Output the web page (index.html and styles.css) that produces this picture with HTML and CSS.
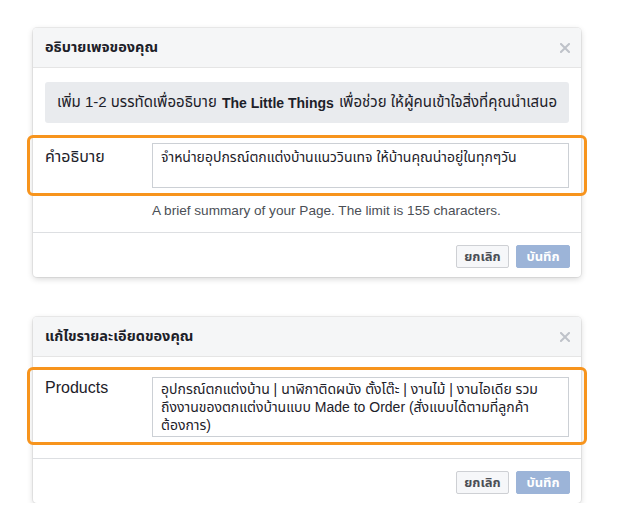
FILE: index.html
```html
<!DOCTYPE html>
<html>
  <head>
    <meta charset="utf-8" />
    <title>Page Info</title>
    <link rel="stylesheet" href="styles.css">
  </head>
  <body>
    <div class="page">

      <div class="dialog">
        <div class="dialog-header">
          <span class="dialog-title">อธิบายเพจของคุณ</span>
          <svg class="close" width="10" height="10" viewBox="0 0 10 10">
            <path d="M1 1 L9 9 M9 1 L1 9" stroke="#bec2c9" stroke-width="2" stroke-linecap="square" />
          </svg>
        </div>
        <div class="dialog-body">
          <div class="notice">
            เพิ่ม 1-2 บรรทัดเพื่ออธิบาย<b>The Little Things</b>เพื่อช่วย ให้ผู้คนเข้าใจสิ่งที่คุณนำเสนอ
          </div>
          <div class="field-row highlight">
            <div class="field-label">คำอธิบาย</div>
            <div class="field-input tall">จำหน่ายอุปกรณ์ตกแต่งบ้านแนววินเทจ ให้บ้านคุณน่าอยู่ในทุกๆวัน</div>
          </div>
          <div class="field-help">A brief summary of your Page. The limit is 155 characters.</div>
        </div>
        <div class="dialog-footer">
          <button class="btn btn-cancel">ยกเลิก</button>
          <button class="btn btn-primary" disabled>บันทึก</button>
        </div>
      </div>

      <div class="dialog">
        <div class="dialog-header">
          <span class="dialog-title">แก้ไขรายละเอียดของคุณ</span>
          <svg class="close" width="10" height="10" viewBox="0 0 10 10">
            <path d="M1 1 L9 9 M9 1 L1 9" stroke="#bec2c9" stroke-width="2" stroke-linecap="square" />
          </svg>
        </div>
        <div class="dialog-body compact">
          <div class="field-row highlight">
            <div class="field-label">Products</div>
            <div class="field-input">
              <div>อุปกรณ์ตกแต่งบ้าน | นาฬิกาติดผนัง ตั้งโต๊ะ | งานไม้ | งานไอเดีย รวม</div>
              <div>ถึงงานของตกแต่งบ้านแบบ Made to Order (สั่งแบบได้ตามที่ลูกค้า</div>
              <div>ต้องการ)</div>
            </div>
          </div>
        </div>
        <div class="dialog-footer">
          <button class="btn btn-cancel">ยกเลิก</button>
          <button class="btn btn-primary" disabled>บันทึก</button>
        </div>
      </div>

    </div>
  </body>
</html>
```

FILE: styles.css
```css
body {
  margin: 0;
  background: #fff;
  font-family: "Helvetica Neue", "Liberation Sans", "Noto Sans Thai", Tahoma, sans-serif;
  color: #1d2129;
}

.page {
  padding: 28px 0 0 33px;
  display: flex;
  flex-direction: column;
  gap: 40px;
}

.dialog {
  width: 548px;
  background: #fff;
  border-radius: 4px;
  box-shadow: 0 0 0 1px rgba(0, 0, 0, .06), 0 2px 6px rgba(0, 0, 0, .16);
}

.dialog-header {
  display: flex;
  align-items: center;
  justify-content: space-between;
  height: 39px;
  padding: 0 11px 0 12px;
  background: #f5f6f7;
  border-bottom: 1px solid #e5e5e5;
  border-radius: 4px 4px 0 0;
}

.dialog-title {
  font-size: 14.5px;
  font-weight: bold;
}

.dialog-body {
  padding: 14px 12px 13px;
  border-bottom: 1px solid #dddfe2;
}
.dialog-body.compact {
  padding-top: 10px;
  padding-bottom: 13px;
}

.notice {
  background: #e9ebee;
  border-radius: 3px;
  padding: 0 12px;
  height: 41px;
  display: flex;
  align-items: center;
  font-size: 15px;
  margin-bottom: 12px;
}
.notice b {
  margin: 0 5px;
  font-size: 14px;
}

.field-row {
  display: flex;
  margin: 0 -18px;
  padding: 5px 15px;
}
.compact .field-row {
  padding: 7px 15px 5px;
}
.highlight {
  border: 3px solid #f7941d;
  border-radius: 6px;
}

.field-label {
  width: 107px;
  flex-shrink: 0;
  font-size: 16px;
  padding-top: 2px;
}

.field-input {
  flex: 1;
  border: 1px solid #ccd0d5;
  padding: 2px 8px;
  font-size: 14px;
  line-height: 18px;
  white-space: nowrap;
}
.field-input.tall {
  padding: 4px 8px;
  height: 35px;
}

.field-help {
  margin: 7px 0 0 107px;
  font-size: 13.6px;
  line-height: 16px;
  color: #4b4f56;
}

.dialog-footer {
  display: flex;
  justify-content: flex-end;
  gap: 7px;
  padding: 12px 11px 9px;
}

.btn {
  height: 23px;
  padding: 0;
  border: 1px solid #ced0d4;
  border-radius: 2px;
  background: #f6f7f9;
  color: #4b4f56;
  font-family: inherit;
  font-size: 13px;
  font-weight: bold;
}
.btn-cancel {
  width: 53px;
}
.btn-primary {
  width: 54px;
  background: #9cb4d8;
  border-color: #9cb4d8;
  color: #fff;
}
```
